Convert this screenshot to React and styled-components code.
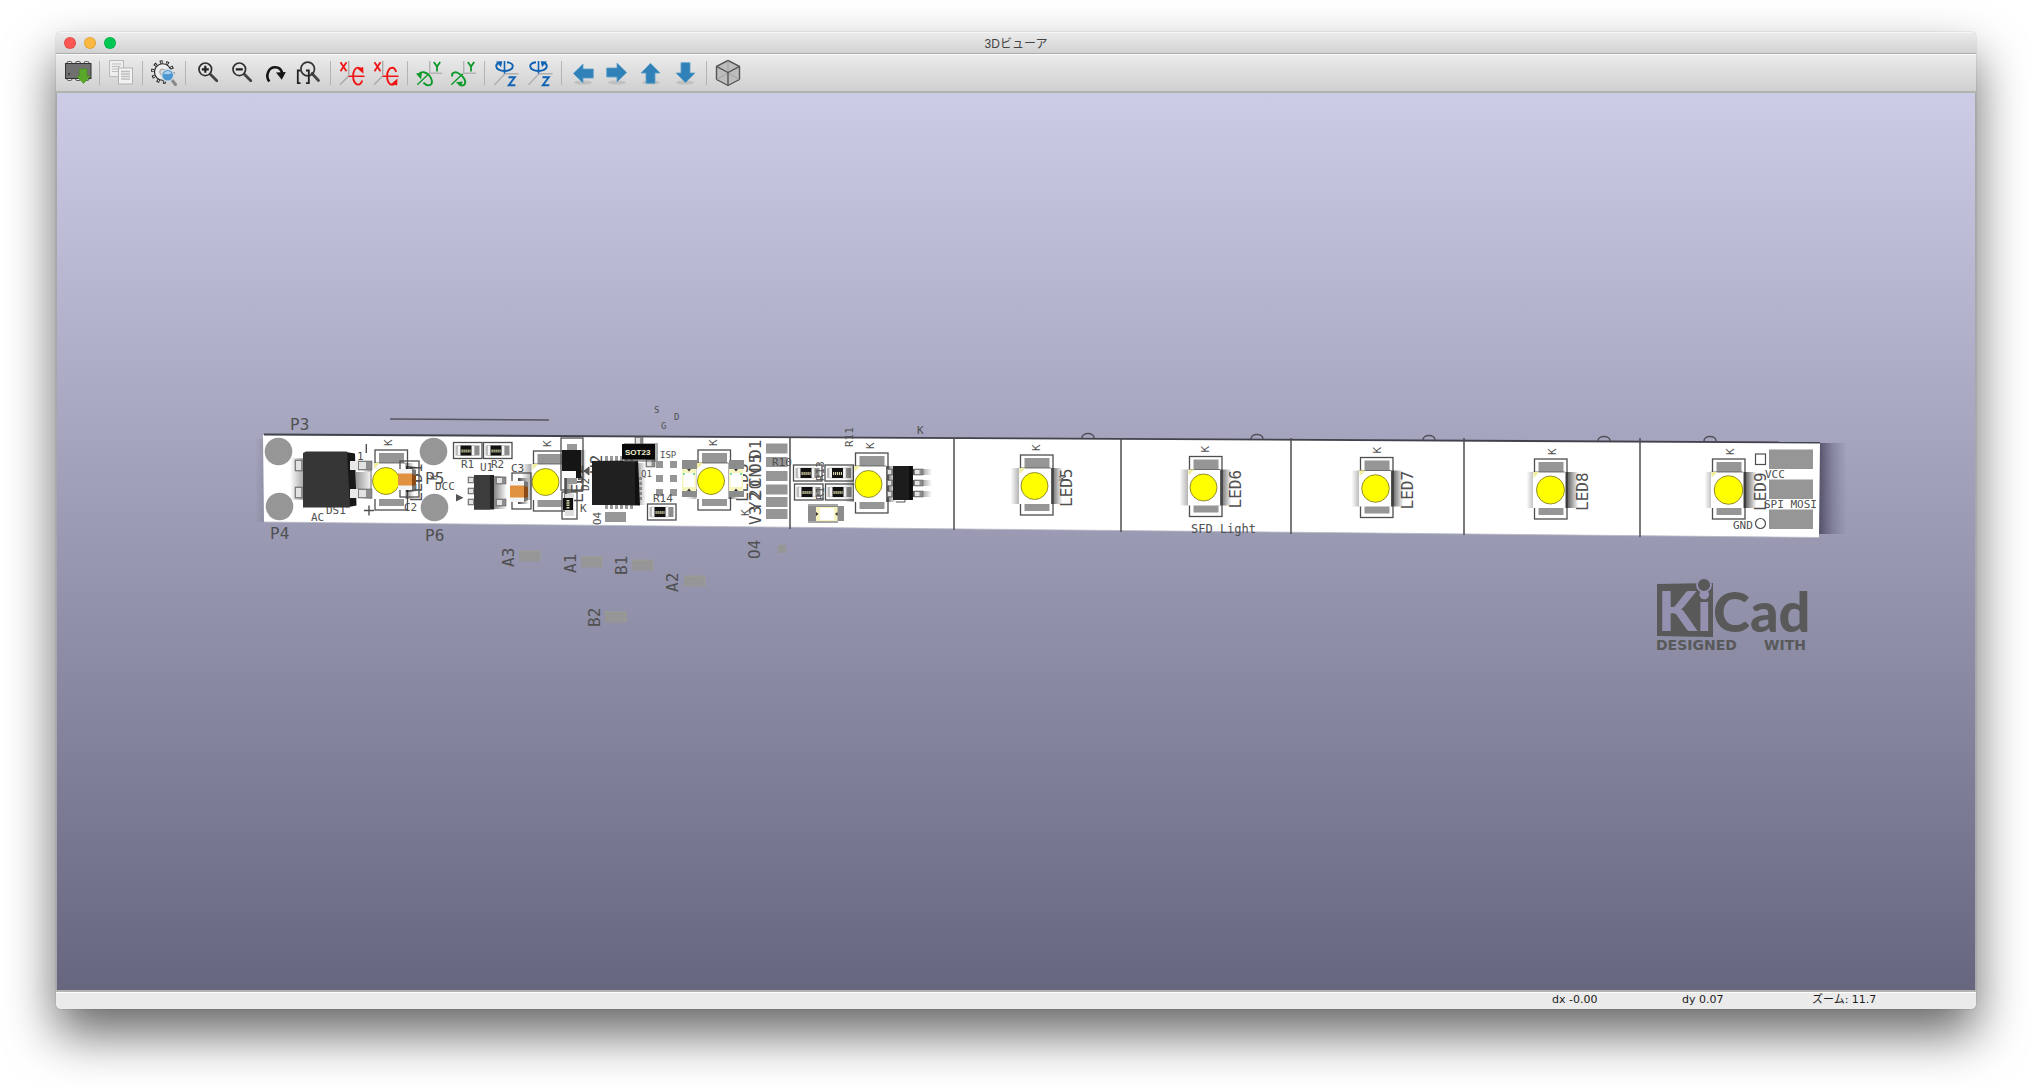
import React from "react";
import styled, { createGlobalStyle } from 'styled-components';

const GlobalStyle = createGlobalStyle`
  * {
    box-sizing: border-box;
  }

  body {
    margin: 0;
    background: #fff;
    font-family: "Liberation Sans", "Noto Sans CJK JP", sans-serif;
  }
`;

const Desktop = styled.div`
  min-height: 100vh;
  padding: 32px 56px 80px;
  display: flex;
  flex-direction: column;
`;

const Window = styled.main`
  flex: 1;
  display: flex;
  flex-direction: column;
  border-radius: 5px;
  overflow: hidden;
  box-shadow: 0 0 1px rgba(0, 0, 0, 0.5), 0 25px 50px rgba(0, 0, 0, 0.6);
`;

const TitleBar = styled.header`
  display: grid;
  grid-template-columns: 1fr auto 1fr;
  align-items: center;
  height: 22px;
  padding: 0 8px;
  background: linear-gradient(#ebebeb, #d2d2d2);
  border-top: 1px solid #f6f6f6;
  border-bottom: 1px solid #acacac;
`;

const WindowButtons = styled.div`
  display: flex;
  gap: 8px;
`;

const WindowButton = styled.button`
  width: 12px;
  height: 12px;
  padding: 0;
  border: 1px solid rgba(0, 0, 0, 0.1);
  border-radius: 50%;
  background: ${props => props.$color};
`;

const Title = styled.h1`
  margin: 0;
  padding-top: 2px;
  font-size: 12px;
  line-height: 18px;
  font-weight: normal;
  color: #444;
`;

const Toolbar = styled.div`
  display: flex;
  align-items: center;
  height: 39px;
  padding: 0 5px;
  background: linear-gradient(#ebebeb, #d0d0d0);
  border-top: 1px solid #fafafa;
  border-bottom: 2px solid #b2b2ae;
`;

const ToolButton = styled.button`
  display: flex;
  align-items: center;
  justify-content: center;
  width: 34px;
  height: 34px;
  padding: 0;
  border: 0;
  background: none;
`;

const Separator = styled.div`
  width: 1px;
  height: 24px;
  margin: 0 4px;
  background: #b4b4b4;
`;

const Viewport = styled.section`
  flex: 1;
  min-height: 0;
  display: flex;
  border: solid #a8a8ac;
  border-width: 0 1px;
  background: linear-gradient(#cccce6, #66667f);
`;

const Scene = styled.svg`
  display: block;
  width: 100%;
  height: auto;
`;

const SilkText = styled.text`
  font-family: "DejaVu Sans Mono", monospace;
  font-size: ${props => props.$size}px;
  fill: #505050;
`;

const StatusBar = styled.footer`
  display: flex;
  justify-content: flex-end;
  height: 19px;
  border-top: 2px solid #b4b4b4;
  background: #ebebeb;
  box-shadow: inset 0 1px #fff;
`;

const StatusField = styled.span`
  width: ${props => props.$width}px;
  font-family: "DejaVu Sans", "Noto Sans CJK JP", sans-serif;
  font-size: 11px;
  line-height: 15px;
  color: #1c1c1c;
`;

const Icon = ({ children }) => (
  <svg width="26" height="28" viewBox="0 0 26 28" fill="none" overflow="visible" aria-hidden="true">
    {children}
  </svg>
);

const ReloadIcon = () => (
  <Icon>
    <g fill="#e4e4e4" stroke="#555">
      {[2, 10.5, 19].map(x => <rect key={x} x={x} y="2.5" width="5" height="4" rx="1.5" />)}
      {[2, 10.5, 19].map(x => <rect key={x} x={x} y="17.5" width="5" height="4" rx="1.5" />)}
    </g>
    <rect x="0.5" y="4.5" width="25.5" height="15" fill="#707070" stroke="#333" />
    <circle cx="4" cy="15" r="1.2" fill="#444" />
    <path d="M14.5 10h7.5v7h3.5l-7 7.5-7-7.5h3z" fill="#5aa82a" stroke="#3f8a18" strokeWidth="0.6" />
  </Icon>
);

const CopyIcon = () => (
  <Icon>
    <rect x="1.5" y="1.5" width="14" height="16" fill="#eee" stroke="#bbb" />
    <path d="M4 5h9M4 7.5h8M4 10h9M4 12.5h6" stroke="#bdbdbd" />
    <rect x="10.5" y="9" width="14" height="16" fill="#f2f2f2" stroke="#b2b2b2" />
    <path d="M13 12.5h9M13 15h9M13 17.5h9M13 20h9" stroke="#bdbdbd" strokeWidth="1.4" />
  </Icon>
);

const OptionsIcon = () => (
  <Icon>
    <circle cx="11.7" cy="13" r="10" stroke="#222" strokeWidth="3.4" strokeDasharray="2.8 3.48" />
    <circle cx="11.7" cy="13" r="9.6" stroke="#ededed" strokeWidth="2.2" strokeDasharray="1 5.03" strokeDashoffset="-0.8" />
    <circle cx="11.7" cy="13" r="8.2" fill="#ededed" stroke="#222" strokeWidth="1.1" />
    <circle cx="11.7" cy="13" r="3" fill="#ddd" stroke="#999" />
    <path d="M20.5 20.5l4 5" stroke="#888" strokeWidth="3" strokeLinecap="round" />
    <circle cx="16.7" cy="16.3" r="6" fill="#4c97cf" stroke="#cfd8dd" strokeWidth="1.4" />
    <path d="M12.5 15.5a4.4 4.4 0 0 1 8-1.5c-2 2-5 .5-8 1.5z" fill="#a9d2f0" />
  </Icon>
);

const ZoomIcon = ({ plus }) => (
  <Icon>
    <path d="M16.3 15.3l6.5 6.5" stroke="#444" strokeWidth="2.8" strokeLinecap="round" />
    <circle cx="11.3" cy="10.3" r="6.3" fill="#e2e2e2" stroke="#303030" strokeWidth="1.7" />
    <path d={plus ? "M7.8 10.3h7M11.3 6.8v7" : "M7.8 10.3h7"} stroke="#222" strokeWidth="2.2" />
  </Icon>
);

const RedrawIcon = () => (
  <Icon>
    <path d="M7.3 22.6C3 16.5 6.500 8.300 13 8.300c4.200 0 6.800 2.500 7.200 7" stroke="#151515" strokeWidth="2.6" />
    <path d="M14 13.500l9.800-.5-4 7.800z" fill="#151515" />
  </Icon>
);

const FitIcon = () => (
  <Icon>
    <path d="M16 14.5l6.5 7" stroke="#444" strokeWidth="2.8" strokeLinecap="round" />
    <circle cx="11.7" cy="10" r="6.8" stroke="#333" strokeWidth="1.7" />
    <path d="M4.5 11.5H1.8v12.7h2.7M10 11.5h2.8v12.7H10" stroke="#222" strokeWidth="1.8" />
  </Icon>
);

const RotateXIcon = ({ reverse }) => (
  <Icon>
    <path d="M9.7 2v14M9.7 17L1 25.7" stroke="#aaa" strokeWidth="1.4" />
    <path d="M1.5 3.3l6 9M7.5 3.3l-6 9" stroke="#f01414" strokeWidth="1.8" />
    <path d="M9.5 17.2h16" stroke="#f01414" strokeWidth="1.4" />
    <g transform={reverse ? "matrix(1 0 0 -1 0 34.4)" : undefined}>
      <path d="M23.2 21.5c-1 3-2.6 4.3-4.3 4.1-2.7-.2-4.8-3.7-4.8-8.4s2-8.6 4.8-8.6c1.4 0 2.7 1 3.6 3" stroke="#f01414" strokeWidth="1.9" />
      <path d="M18.2 9.5l6-1.5.3 6.8z" fill="#f01414" />
    </g>
  </Icon>
);

const RotateYIcon = ({ reverse }) => (
  <Icon>
    <path d="M13.7 2v12.3H26" stroke="#b4b4b4" strokeWidth="1.4" />
    <path d="M17.8 3l3.2 4.6L24.2 3M21 7.6v5" stroke="#0f9a2c" strokeWidth="1.8" />
    <path d="M1.3 25.8L12.8 14.8" stroke="#0f9a2c" strokeWidth="1.4" />
    {reverse ? (
      <>
        <path d="M2.2 17.5c-1-4 3-5.500 7-2.700 4.500 3 7.300 7.500 5.500 10.500-1 1.700-3.500 1.600-6 0" stroke="#0f9a2c" strokeWidth="1.9" />
        <path d="M5.8 23.2l7-.8-2 5z" fill="#0f9a2c" />
      </>
    ) : (
      <>
        <path d="M3.5 14.500c2-2.500 6.500-1.500 9.500 1.700 3.200 3.400 3.900 8 1.600 9.500-1.800 1.200-4.800.2-7.200-2" stroke="#0f9a2c" strokeWidth="1.9" />
        <path d="M0 14.600l6-1.100-1 7z" fill="#0f9a2c" />
      </>
    )}
  </Icon>
);

const RotateZIcon = ({ reverse }) => (
  <Icon>
    <path d="M1.3 26L12 14.7h13.5" stroke="#b0b0b0" strokeWidth="1.4" />
    <path d="M11.5 2v12.5" stroke="#0f62b4" strokeWidth="1.6" />
    <path d="M15.5 18.2h6.3l-6 8h6.5" stroke="#0f62b4" strokeWidth="1.9" />
    <g transform={reverse ? "matrix(-1 0 0 1 23 0)" : undefined}>
      <path d="M14 3.2c3.5.4 5.8 2 5.8 4.1 0 2.7-3.8 4.7-8.3 4.7s-8.3-2-8.3-4.7c0-1.5 1-2.8 3-3.6" stroke="#0f62b4" strokeWidth="1.9" />
      <path d="M3 2.6l6.3-.3-1.3 6z" fill="#0f62b4" />
    </g>
  </Icon>
);

const ArrowIcon = ({ angle = 0 }) => (
  <Icon>
    <ellipse cx="13" cy="23.5" rx="9" ry="2" fill="#000" opacity="0.1" />
    <path
      d="M3.3 14.500l9.700-9.500v5h10.300v9H13v5z"
      fill="#2f81b7"
      stroke="#5a9fca"
      strokeWidth="0.8"
      transform={`rotate(${angle} 13 14)`}
    />
  </Icon>
);

const CubeIcon = () => (
  <Icon>
    <path d="M13 1.5l11.5 5.8v13.2L13 26.5 1.5 20.5V7.3z" fill="#bdbdbd" stroke="#555" strokeWidth="1.4" strokeLinejoin="round" />
    <path d="M13 1.5v12.3M1.5 20.5L13 14l11.5 6.5" stroke="#999" strokeWidth="0.8" />
    <path d="M1.5 7.3L13 13.5l11.5-6.2M13 13.5v13" stroke="#555" strokeWidth="1.4" />
  </Icon>
);

const toolGroups = [
  [['Reload board', <ReloadIcon />]],
  [['Copy image', <CopyIcon />]],
  [['Options', <OptionsIcon />]],
  [
    ['Zoom in', <ZoomIcon plus />],
    ['Zoom out', <ZoomIcon />],
    ['Redraw', <RedrawIcon />],
    ['Fit view', <FitIcon />],
  ],
  [['Rotate X', <RotateXIcon />], ['Rotate X back', <RotateXIcon reverse />]],
  [['Rotate Y', <RotateYIcon />], ['Rotate Y back', <RotateYIcon reverse />]],
  [['Rotate Z', <RotateZIcon />], ['Rotate Z back', <RotateZIcon reverse />]],
  [
    ['Move left', <ArrowIcon />],
    ['Move right', <ArrowIcon angle={180} />],
    ['Move up', <ArrowIcon angle={90} />],
    ['Move down', <ArrowIcon angle={270} />],
  ],
  [['Orthographic', <CubeIcon />]],
];

const Silk = ({ x, y, size = 11, up, children }) => (
  <SilkText x={x} y={y} $size={size} transform={up ? `rotate(-90 ${x} ${y})` : undefined}>
    {children}
  </SilkText>
);

// power LED, left is the offset of its outline from the lens centre
const Led = ({ cx, cy, left = -14, r = 13.5, label, labelX }) => (
  <g>
    <rect x={cx + left} y={cy - 31} width="32.5" height="60" fill="#fff" stroke="#4e4e4e" strokeWidth="1.3" />
    <rect x={cx + left + 4} y={cy - 28} width="25" height="11" fill="#969696" />
    <rect x={cx + left + 4} y={cy + 17} width="25" height="8" fill="#969696" />
    <Silk x={cx + 5.5} y={cy - 35} up>K</Silk>
    {label && <Silk x={labelX || cx + 37} y={cy + 21} size={16} up>{label}</Silk>}
    <rect x={cx - 24} y={cy - 18} width="10" height="36" fill="url(#shadeLeft)" />
    <rect x={cx + 15} y={cy - 18} width="13" height="36" fill="url(#shadeRight)" />
    <rect x={cx + left - 1.5} y={cy - 18} width="32" height="36" fill="#fff" />
    <path d={`M${cx + left - 1} ${cy - 18}h31.5`} stroke="#555" strokeWidth="0.8" />
    <path d={`M${cx + left - 1} ${cy - 18}h6l-6 6z`} fill="#f2eea0" />
    <circle cx={cx} cy={cy} r={r} fill="#ff0" stroke="#77702a" strokeWidth="0.8" />
  </g>
);

const Resistor = ({ x, y }) => (
  <g>
    <rect x={x} y={y} width="28.5" height="16" fill="#fff" stroke="#4e4e4e" strokeWidth="1.3" />
    <rect x={x + 2} y={y + 3} width="4.5" height="10" fill="#bbb" />
    <rect x={x + 19} y={y + 3} width="7" height="10" fill="#8c8c8c" />
    <rect x={x + 4} y={y + 3} width="17" height="10" fill="#f4f4f4" stroke="#aaa" strokeWidth="0.5" />
    <rect x={x + 7} y={y + 3} width="11" height="10" fill="#111" />
    <path d={`M${x + 8} ${y + 8.5}h9`} stroke="#d6d6a8" strokeWidth="3" strokeDasharray="1.2 0.8" />
  </g>
);

const Capacitor = ({ x, y }) => (
  <g>
    <rect x={x + 2} y={y - 8} width="19" height="36" fill="none" stroke="#4e4e4e" strokeWidth="1.3" />
    <rect x={x + 8} y={y - 3} width="11" height="26" fill="url(#shadeRight)" />
    <path d={`M${x + 14} ${y}l4 1v18l-4 2z`} fill="#777" />
    <rect x={x} y={y} width="14" height="21" fill="#f3f3f3" />
    <rect x={x} y={y + 4.5} width="14" height="12" fill="#df9140" />
    <path d={`M${x + 14} ${y + 5}l4 1v10l-4 1z`} fill="#8a4a18" />
  </g>
);

const SmallLed = ({ x, y }) => (
  <g>
    <rect x={x} y={y - 9} width="15" height="9" fill="#8c8c8c" />
    <rect x={x} y={y + 20} width="15" height="8" fill="#8c8c8c" />
    <rect x={x} y={y} width="14" height="22" fill="#f7f5bd" />
    <rect x={x + 1.5} y={y + 4} width="11" height="14" fill="#fff" />
    <path d={`M${x + 5} ${y}h4l-2 2.5zM${x + 5} ${y + 22}h4l-2-2.5z`} fill="#333" />
    <path d={`M${x + 1} ${y + 5}h2M${x + 11} ${y + 5}h2`} stroke="#4bd58a" strokeWidth="1.5" />
  </g>
);

const Leg = ({ x, y, w = 10, h = 6 }) => (
  <g>
    <rect x={x} y={y} width={w} height={h} fill="#8d8d8d" stroke="#555" strokeWidth="0.5" />
    <rect x={x + 1} y={y + 1} width={w / 2} height={h - 2} fill="#e2e2e2" />
  </g>
);

const cuts = [[790, 528], [954, 529], [1121, 531], [1291, 533], [1464, 534], [1640, 536]];
const connectorPads = [443.5, 457, 471, 484.5, 497, 509];
const testPads = [
  { name: 'A3', x: 514, y: 567, px: 519, py: 551 },
  { name: 'A1', x: 576, y: 573, px: 581, py: 557 },
  { name: 'B1', x: 627, y: 575, px: 632, py: 560 },
  { name: 'A2', x: 678, y: 592, px: 684, py: 576 },
  { name: 'B2', x: 600, y: 627, px: 605, py: 612 },
];

const Board = () => (
  <g>
    <rect x="1819" y="443" width="28" height="91" fill="url(#boardShade)" />
    <rect x="255" y="439" width="9" height="83" fill="url(#shadeLeft)" opacity="0.3" />
    <path d="M263 435l1557 7.5-1 95L264 522z" fill="#fff" />
    <path d="M264 434.5l1556 8" stroke="#42424c" strokeWidth="1.8" />
    <path d="M390 419l159 1" stroke="#555560" strokeWidth="1.6" />
    <path d="M264 522l1555 15.5" stroke="#b8b8c4" strokeWidth="0.8" />
    {cuts.map(([x, bottom]) => (
      <path key={x} d={`M${x} 438V${bottom + 1}`} stroke="#4e4e4e" strokeWidth="1.5" />
    ))}
    {[[1088, 438], [1257, 439], [1429, 440], [1604, 441], [1710, 441]].map(([x, y]) => (
      <path key={x} d={`M${x - 6} ${y}c0-6 12-6 12 0`} fill="none" stroke="#50505a" strokeWidth="1.5" />
    ))}
  </g>
);

const LeftSection = () => (
  <g>
    {[[278.5, 451.5], [279.5, 506.5], [433.5, 451.5], [434.5, 507.5]].map(([x, y]) => (
      <circle key={`${x}-${y}`} cx={x} cy={y} r="13.8" fill="#969696" />
    ))}
    <Silk x={290} y={430} size={16}>P3</Silk>
    <Silk x={270} y={539} size={16}>P4</Silk>
    <Silk x={425} y={484} size={16}>P5</Silk>
    <Silk x={425} y={541} size={16}>P6</Silk>
    <Silk x={437} y={480} size={9} up>K</Silk>
    <Silk x={435} y={490}>DCC</Silk>
    <Silk x={311} y={521}>AC</Silk>
    <Silk x={326} y={514}>DS1</Silk>
    <Silk x={357} y={460}>1</Silk>
    <path d="M366.3 444v9M364 510.5h10M369 505.5v10" stroke="#505050" strokeWidth="1.4" />
    <path d="M456 494v7.5l7.500-3.700z" fill="#555" />

    <Led cx={386} cy={481} left={-11} label="LED1" labelX={422} />
    <Silk x={404} y={511}>C2</Silk>
    <Capacitor x={398} y={469} />

    <rect x="290" y="458" width="14" height="42" fill="url(#shadeLeft)" />
    <rect x="356" y="472" width="14" height="17" fill="url(#shadeLight)" />
    <Leg x={295} y={460} h={11} />
    <Leg x={295} y={487} h={11} />
    <Leg x={358} y={461} w={14} h={9} />
    <Leg x={358} y={489} w={14} h={9} />
    <path d="M346 452l9 1.500 1.500 52-10.500 2z" fill="#181818" />
    <path d="M303 453l3-1.500h41l3 56h-47z" fill="#363636" />
    <rect x="350" y="461" width="8" height="9" fill="#e8e8e8" />
    <rect x="350" y="489" width="8" height="9" fill="#e8e8e8" />

    <Resistor x={453.5} y={442.5} />
    <Resistor x={483.5} y={442.5} />
    <Silk x={461} y={468}>R1</Silk>
    <Silk x={491} y={468}>R2</Silk>
    <Silk x={480} y={471}>U1</Silk>
    {[477, 488, 499].map(y => <Leg key={y} x={468} y={y} w={8} />)}
    <rect x="493" y="476" width="14" height="33" fill="url(#shadeRight)" opacity="0.7" />
    {[477, 499].map(y => <Leg key={y} x={496} y={y} w={10} h={7} />)}
    <rect x="474" y="475" width="20" height="34.5" fill="#222" />
    <rect x="474" y="475" width="16" height="34.5" fill="#3c3c3c" />

    <Led cx={545.5} cy={482} left={-12} label="LED2" labelX={583} />
    <Silk x={511} y={472}>C3</Silk>
    <Capacitor x={510} y={481} />
  </g>
);

const SotLabel = styled.text`
  font-family: "Liberation Sans", sans-serif;
  font-size: 8px;
  font-weight: bold;
  fill: #f2f2cf;
`;

const ControllerSection = () => (
  <g>
    <rect x="561" y="438" width="22" height="52" fill="none" stroke="#4e4e4e" strokeWidth="1.3" />
    <rect x="567" y="444" width="10" height="7" fill="#999" />
    <rect x="567" y="477" width="10" height="7" fill="#999" />
    <rect x="578" y="450" width="8" height="30" fill="url(#shadeRight)" />
    <rect x="562" y="450" width="19" height="28" fill="#151515" />
    <rect x="562" y="471" width="14" height="7" fill="#fafafa" />
    <rect x="562" y="492" width="15" height="27" fill="none" stroke="#4e4e4e" strokeWidth="1.3" />
    <rect x="565" y="494" width="9" height="22" fill="#ddd" />
    <rect x="563" y="498" width="10" height="12" fill="#111" />
    <path d="M568 500v9" stroke="#d6d6a8" strokeWidth="3" strokeDasharray="1.5 0.8" />
    <path d="M583 471h5M589 467v8l-5-4z" fill="#555" stroke="#555" />
    <Silk x={589} y={491} up>D2</Silk>
    <Silk x={602} y={474} size={16} up>U2</Silk>
    <Silk x={580} y={512}>K</Silk>
    <Silk x={601} y={525} up>O4</Silk>
    <rect x="605" y="512" width="21" height="10" fill="#969696" />

    <rect x="636" y="463" width="10" height="42" fill="url(#shadeRight)" opacity="0.6" />
    {[605, 610, 615, 620, 625, 630].map(x => (
      <g key={x} fill="#999">
        <rect x={x} y="456" width="3" height="5" />
        <rect x={x} y="505" width="3" height="4" />
      </g>
    ))}
    {[477, 482, 487, 492, 497].map(y => <rect key={y} x="638" y={y} width="4" height="3" fill="#888" />)}
    <path d="M592 461l46-.5 2 45-47-1z" fill="#101010" />
    <rect x="592" y="461" width="43" height="44" fill="#202020" />

    <Leg x={635} y={437} w={8} h={8} />
    <Leg x={646} y={459} w={9} h={8} />
    <rect x="624" y="443" width="34" height="19" fill="#555" opacity="0.5" />
    <rect x="622" y="444" width="33" height="15.5" fill="#090909" />
    <SotLabel x="625" y="455">SOT23</SotLabel>
    <Silk x={660} y={458} size={9}>ISP</Silk>
    <Silk x={641} y={477} size={9}>Q1</Silk>
    <Silk x={654} y={413} size={9}>S</Silk>
    <Silk x={674} y={420} size={9}>D</Silk>
    <Silk x={661} y={429} size={9}>G</Silk>
    {[461, 475, 489].map(y => (
      <g key={y} fill="#969696">
        <rect x="656" y={y} width="7" height="7" />
        <rect x="670" y={y} width="7" height="7" />
      </g>
    ))}
    <Silk x={653} y={502}>R14</Silk>
    <Resistor x={647.5} y={504} />

    <Led cx={711} cy={481} left={-13} label="LED3" labelX={748} />
    <SmallLed x={682} y={469} />
    <SmallLed x={729} y={469} />
    <Silk x={749} y={516} up>K</Silk>
    {connectorPads.map(y => <rect key={y} x="766" y={y} width="21.5" height="10" fill="#969696" />)}
    <Silk x={761} y={525} size={16} up>V3</Silk>
    <Silk x={761} y={511} size={16} up>Y2</Silk>
    <Silk x={761} y={499} size={16} up>2O</Silk>
    <Silk x={761} y={487} size={16} up>CN</Silk>
    <Silk x={761} y={473} size={16} up>O5</Silk>
    <Silk x={761} y={459} size={16} up>D1</Silk>
    <Silk x={772} y={466}>R10</Silk>
    <Silk x={760} y={559} size={16} up>O4</Silk>
    <rect x="778" y="545" width="8" height="8" fill="#969696" />
  </g>
);

const RightSection = () => (
  <g>
    <Resistor x={793.5} y={465} />
    <Resistor x={825} y={465} />
    <Resistor x={794.5} y={484} />
    <Resistor x={825.5} y={484} />
    <Silk x={824} y={481} up>R13</Silk>
    <Silk x={824} y={500} up>R1</Silk>
    <Silk x={853} y={447} up>R11</Silk>
    <Silk x={917} y={434}>K</Silk>
    <rect x="808" y="506" width="36" height="15" fill="#8c8c8c" />
    <path d="M808 505h30M808 522h30" stroke="#4e4e4e" strokeWidth="1.2" />
    <rect x="816" y="507" width="21.5" height="14" fill="#f7f5bd" />
    <rect x="820" y="508" width="14" height="12" fill="#fff" />
    <path d="M816 512v4l2.5-2zM837.5 512v4l-2.5-2z" fill="#333" />

    <Led cx={868.5} cy={484} left={-13} />
    {[469, 480, 491].map(y => (
      <g key={y}>
        <rect x="912" y={y} width="20" height="6" fill="url(#shadeRight)" />
        <Leg x={887} y={y} w={6} />
        <Leg x={914} y={y} w={9} />
      </g>
    ))}
    <path d="M896 502h9v-2" fill="none" stroke="#4e4e4e" />
    <rect x="893" y="466" width="20" height="34" fill="#1c1c1c" />
    <path d="M909 466h3.500v34H909z" fill="#0c0c0c" />

    <Led cx={1034.5} cy={486} label="LED5" />
    <Silk x={1066} y={481} size={9} up>K</Silk>
    <Led cx={1203.5} cy={487.5} label="LED6" />
    <Led cx={1375.5} cy={488.5} left={-15} label="LED7" r={13.8} />
    <Led cx={1550.5} cy={490} left={-16} label="LED8" r={14} />
    <Led cx={1728.5} cy={490} left={-16} label="LED9" r={14.3} />
    <Silk x={1191} y={533} size={12}>SFD Light</Silk>

    {[449.5, 479.5, 509.5].map(y => <rect key={y} x="1769" y={y} width="44" height="19.5" fill="#969696" />)}
    <rect x="1755.5" y="454" width="10" height="10.5" fill="none" stroke="#4e4e4e" strokeWidth="1.2" />
    <circle cx="1760.5" cy="523.5" r="5" fill="none" stroke="#4e4e4e" strokeWidth="1.2" />
    <Silk x={1765} y={478}>VCC</Silk>
    <Silk x={1764} y={508}>SPI MOSI</Silk>
    <Silk x={1733} y={529}>GND</Silk>
  </g>
);

const LogoText = styled.text`
  font-family: Lato, sans-serif;
  font-size: 56px;
  font-weight: 900;
  fill: ${props => props.$fill};
`;

const LogoCaption = styled.text`
  font-family: "DejaVu Sans", sans-serif;
  font-size: 14px;
  font-weight: bold;
  fill: #595959;
`;

const KiCadLogo = () => (
  <g>
    <path d="M1657 584l56-1v54l-56-1z" fill="#595959" />
    <LogoText x="1658" y="631" $fill="#9391af">Ki</LogoText>
    <circle cx="1704" cy="585" r="7" fill="#595959" stroke="#9593b1" strokeWidth="1.8" />
    <LogoText x="1713" y="632" $fill="#595959">Cad</LogoText>
    <LogoCaption x="1656" y="650">DESIGNED</LogoCaption>
    <LogoCaption x="1764" y="650">WITH</LogoCaption>
  </g>
);

const BoardScene = () => (
  <Scene viewBox="57 93 1918 897" role="img" aria-label="SFD Light">
    <defs>
      <linearGradient id="shadeRight">
        <stop offset="0" stopColor="#222" stopOpacity="0.85" />
        <stop offset="1" stopColor="#222" stopOpacity="0" />
      </linearGradient>
      <linearGradient id="shadeLeft">
        <stop offset="0" stopColor="#222" stopOpacity="0" />
        <stop offset="1" stopColor="#222" stopOpacity="0.4" />
      </linearGradient>
      <linearGradient id="shadeLight">
        <stop offset="0" stopColor="#999" />
        <stop offset="1" stopColor="#eee" />
      </linearGradient>
      <linearGradient id="boardShade">
        <stop offset="0" stopColor="#4a4860" stopOpacity="0.9" />
        <stop offset="0.5" stopColor="#5c5a72" stopOpacity="0.4" />
        <stop offset="1" stopColor="#66647c" stopOpacity="0" />
      </linearGradient>
    </defs>
    <Board />
    <LeftSection />
    <ControllerSection />
    <RightSection />
    {testPads.map(pad => (
      <g key={pad.name}>
        <Silk x={pad.x} y={pad.y} size={16} up>{pad.name}</Silk>
        <rect x={pad.px} y={pad.py} width="21" height="10.5" fill="#969696" />
        <path d={`M${pad.px} ${pad.py}h21v10`} fill="none" stroke="#a5a58c" strokeWidth="0.8" strokeDasharray="3 1.5" />
      </g>
    ))}
    <KiCadLogo />
  </Scene>
);

const App = () => {
  return (
    <Desktop>
      <GlobalStyle />
      <Window>
        <TitleBar>
          <WindowButtons>
            <WindowButton type="button" aria-label="Close" $color="#fc5753" />
            <WindowButton type="button" aria-label="Minimize" $color="#fdb83f" />
            <WindowButton type="button" aria-label="Zoom" $color="#00c751" />
          </WindowButtons>
          <Title>3Dビューア</Title>
        </TitleBar>
        <Toolbar role="toolbar">
          {toolGroups.map((group, index) => (
            <React.Fragment key={index}>
              {index > 0 && <Separator />}
              {group.map(([name, icon]) => (
                <ToolButton key={name} type="button" aria-label={name}>{icon}</ToolButton>
              ))}
            </React.Fragment>
          ))}
        </Toolbar>
        <Viewport>
          <BoardScene />
        </Viewport>
        <StatusBar>
          <StatusField $width={130}>dx -0.00</StatusField>
          <StatusField $width={130}>dy 0.07</StatusField>
          <StatusField $width={164}>ズーム: 11.7</StatusField>
        </StatusBar>
      </Window>
    </Desktop>
  );
};

export default App;
